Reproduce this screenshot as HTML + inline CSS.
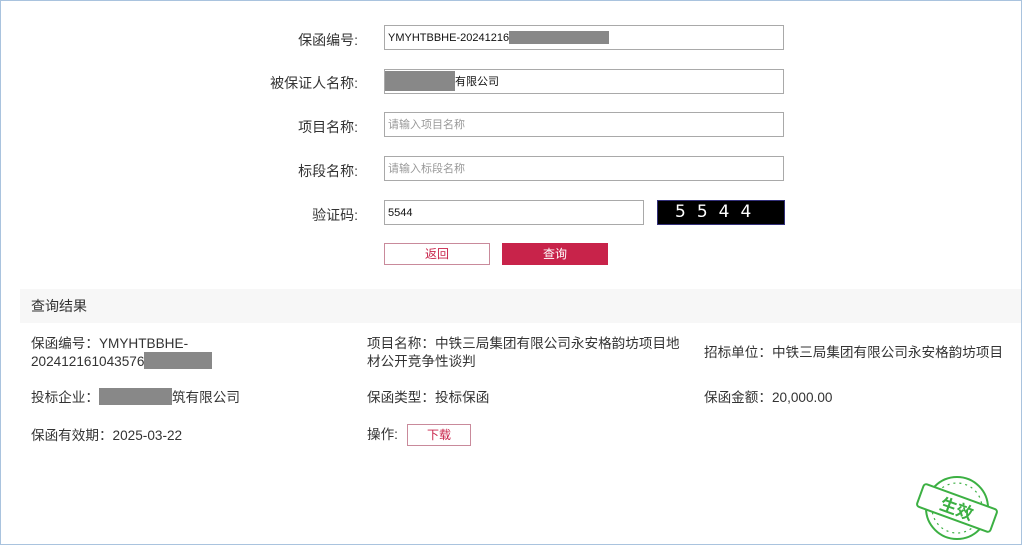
<!DOCTYPE html>
<html><head><meta charset="utf-8"><style>
*{margin:0;padding:0;box-sizing:border-box}
body{width:1024px;height:546px;background:#fff;font-family:"Liberation Sans","Noto Sans CJK SC",sans-serif;color:#333;position:relative;overflow:hidden}
.frame{position:absolute;left:0;top:0;width:1022px;height:545px;border:1px solid #a9c3de}
.lbl{position:absolute;width:200px;left:158px;text-align:right;font-size:14px;color:#333}
.in{position:absolute;left:384px;width:400px;height:25px;border:1px solid #a9a9a9;font-size:11px;line-height:24px;padding-left:3px;color:#111}
.ph{color:#999}
.gray{display:inline-block;background:#888;height:14px;vertical-align:middle}
.r{position:absolute;font-size:13.6px;color:#333;line-height:18px}
</style></head><body>
<div class="frame"></div>
<div class="lbl" style="top:30px">保函编号:</div>
<div class="in" style="top:25px">YMYHTBBHE-20241216<span class="gray" style="width:100px;height:13px;margin-top:-2px"></span></div>
<div class="lbl" style="top:73px">被保证人名称:</div>
<div class="in" style="top:69px;padding-left:0"><span class="gray" style="width:70px;height:20px;margin-top:-2px"></span>有限公司</div>
<div class="lbl" style="top:117px">项目名称:</div>
<div class="in ph" style="top:112px">请输入项目名称</div>
<div class="lbl" style="top:161px">标段名称:</div>
<div class="in ph" style="top:156px">请输入标段名称</div>
<div class="lbl" style="top:205px">验证码:</div>
<div class="in" style="top:200px;width:260px">5544</div>
<div style="position:absolute;left:657px;top:200px;width:128px;height:25px;background:#000;border:1px solid #33307a;color:#fff;font-size:17px;line-height:23px;font-family:'DejaVu Sans',sans-serif;padding-left:17px;letter-spacing:11px">5544</div>
<div style="position:absolute;left:384px;top:243px;width:106px;height:22px;border:1px solid #c98a9b;color:#c8234a;font-size:12px;text-align:center;line-height:20px">返回</div>
<div style="position:absolute;left:502px;top:243px;width:106px;height:22px;background:#c8234a;color:#fff;font-size:12px;text-align:center;line-height:22px">查询</div>
<div style="position:absolute;left:20px;top:289px;width:1001px;height:34px;background:#f7f7f7;font-size:14px;line-height:34px;padding-left:11px">查询结果</div>
<div class="r" style="left:31px;top:335px">保函编号：YMYHTBBHE-<br>202412161043576<span class="gray" style="width:68px;height:17px;margin-top:-3px"></span></div>
<div class="r" style="left:367px;top:335px">项目名称：中铁三局集团有限公司永安格韵坊项目地<br>材公开竞争性谈判</div>
<div class="r" style="left:704px;top:344px">招标单位：中铁三局集团有限公司永安格韵坊项目</div>
<div class="r" style="left:31px;top:389px">投标企业：<span class="gray" style="width:73px;height:17px;margin-top:-3px"></span>筑有限公司</div>
<div class="r" style="left:367px;top:389px">保函类型：投标保函</div>
<div class="r" style="left:704px;top:389px">保函金额：20,000.00</div>
<div class="r" style="left:31px;top:427px">保函有效期：2025-03-22</div>
<div class="r" style="left:367px;top:426px">操作:</div>
<div style="position:absolute;left:407px;top:424px;width:64px;height:22px;border:1px solid #c98a9b;color:#c8234a;font-size:12px;text-align:center;line-height:20px">下载</div>
<svg style="position:absolute;left:910px;top:470px" width="95" height="75" viewBox="0 0 95 75">
<g fill="none" stroke="#3cb043" stroke-width="2">
<circle cx="47" cy="38" r="31"/><circle cx="47" cy="38" r="25" stroke-width="1.2" stroke-dasharray="2 4"/>
<g transform="rotate(20 47 38)"><rect x="8" y="26" width="78" height="24" rx="3" fill="#fff"/></g>
</g>
<text x="47" y="45" text-anchor="middle" transform="rotate(20 47 38)" font-size="17" font-weight="bold" fill="#3cb043" font-family="Noto Sans CJK SC,sans-serif">生效</text>
</svg>
</body></html>
